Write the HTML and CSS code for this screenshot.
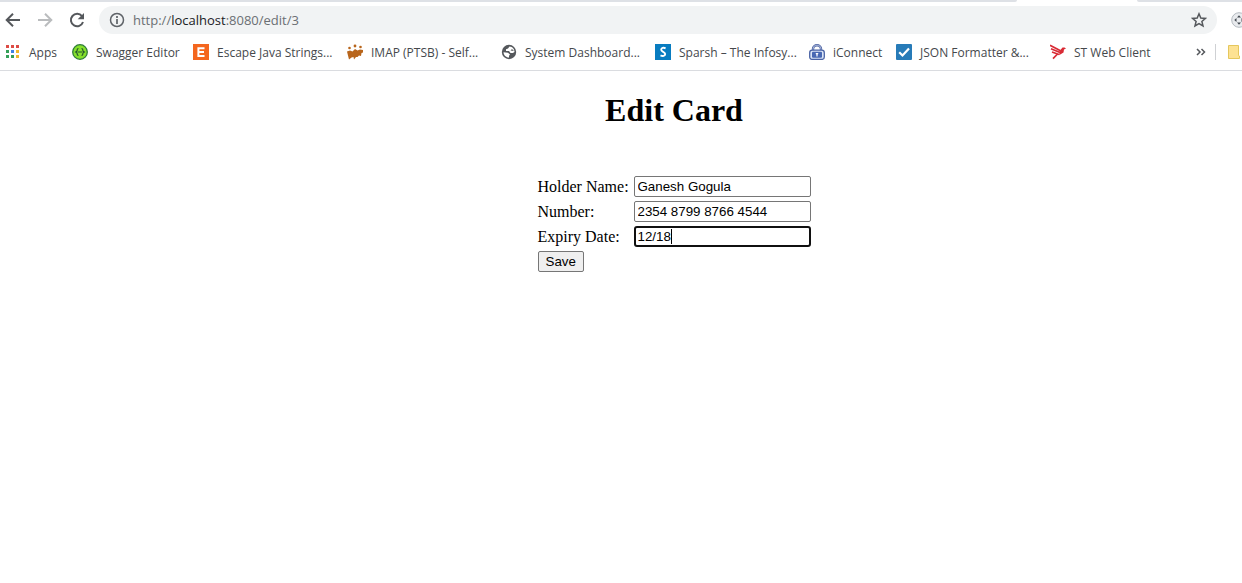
FILE: index.html
```html
<!DOCTYPE html>
<html lang="en">
<head>
<meta charset="utf-8">
<title>Edit Card</title>
<link rel="stylesheet" href="styles.css">
</head>
<body>
<header class="browser">
  <div class="tabstrip"><span class="tabs-before"></span><span class="tabs-after"></span></div>
  <div class="toolbar">
    <div class="nav">
      <button class="nav-button" aria-label="Back"><svg width="16" height="16" viewBox="0 0 16 16" fill="none" stroke="#55585c" stroke-width="2"><path d="M15 8H2M8 1.7 1.7 8 8 14.3"/></svg></button>
      <button class="nav-button" aria-label="Forward"><svg width="16" height="16" viewBox="0 0 16 16" fill="none" stroke="#babcbe" stroke-width="2"><path d="M1 8h13M8 1.7 14.3 8 8 14.3"/></svg></button>
      <button class="nav-button" aria-label="Reload"><svg width="16" height="16" viewBox="0 0 16 16"><path d="M13 4.2A6.2 6.2 0 1 0 14 10" fill="none" stroke="#55585c" stroke-width="2"/><path d="M15 1v6.3H8.7z" fill="#55585c"/></svg></button>
    </div>
    <div class="omnibox">
      <svg width="16" height="16" viewBox="0 0 16 16" fill="none" stroke="#5f6368"><circle cx="8" cy="8" r="6.5" stroke-width="1.5"/><path d="M8 7v5M8 4v2" stroke-width="1.7"/></svg>
      <span class="url"><span class="dim">http://</span>localhost<span class="dim">:8080/edit/3</span></span>
      <button class="star" aria-label="Bookmark this page"><svg width="16" height="16" viewBox="0 0 16 16" fill="none" stroke="#55585c" stroke-width="1.5"><path d="m8 1.8 1.8 4.2 4.6.4-3.5 3 1.1 4.5L8 11.5l-4 2.4 1.1-4.5-3.5-3 4.6-.4z"/></svg></button>
    </div>
    <span class="extension"><svg width="16" height="16" viewBox="0 0 16 16"><circle cx="8" cy="8" r="7.3" fill="#e9ebee" stroke="#b4bac0"/><path d="m8 3.3 2 2.2H6zM8 12.7l2-2.2H6zM3.3 8l2.2-2v4zM12.7 8l-2.2-2v4z" fill="#424951"/></svg></span>
  </div>
  <nav class="bookmarks">
    <div class="links">
    <a class="bookmark" href="#"><svg width="16" height="16" viewBox="0 0 16 16"><path fill="#dd4b45" d="M1 1h3v3H1zM6 1h3v3H6zM11 1h3v3h-3z"/><path fill="#35a058" d="M1 6h3v3H1zM1 11h3v3H1zM6 11h3v3H6z"/><path fill="#3f83e5" d="M6 6h3v3H6z"/><path fill="#f0b72c" d="M11 6h3v3h-3zM11 11h3v3h-3z"/></svg>Apps</a>
    <a class="bookmark" href="#"><svg width="16" height="16" viewBox="0 0 16 16"><circle cx="8" cy="8" r="7.3" fill="#85e02c" stroke="#2f7d38" stroke-width="1.3"/><path d="M6.500 4.500c-1.800 0-1.200 2-1.600 2.800L3.700 8l1.200.7c.4.800-.2 2.800 1.600 2.800M9.500 4.500c1.800 0 1.200 2 1.600 2.800l1.200.7-1.200.7c-.4.800.2 2.800-1.600 2.800M6 8h4" fill="none" stroke="#23552d" stroke-width="1.200"/></svg>Swagger Editor</a>
    <a class="bookmark" href="#"><svg width="16" height="16" viewBox="0 0 16 16"><path fill="#f4661e" d="M0 0h16v16H0z"/><path d="M11.5 4.2H5.4v7.7h6.1M5 8h6" fill="none" stroke="#fff" stroke-width="2"/></svg>Escape Java Strings...</a>
    <a class="bookmark" href="#"><svg width="16" height="16" viewBox="0 0 16 16" fill="#b8651b"><circle cx="2.500" cy="4" r="1.300"/><circle cx="8" cy="2" r="1.400"/><circle cx="13.500" cy="3" r="1.300"/><path d="M0 7.500 3 6.500l2.500 1L8 5l2.500 1.500L13 5.500l3 .5v2.500l-1.500.5-.5 3-2-.5-1.500 1.500-1.500 0-2 2.500-.5-2.500-2 .5-2.500 2-1-4z"/></svg>IMAP (PTSB) - Self...</a>
    <a class="bookmark" href="#"><svg width="16" height="16" viewBox="0 0 16 16"><circle cx="8" cy="8" r="7.200" fill="#55585c"/><path d="M8.500 2.500 7 4.500l-2 .7V7h3l1.500 2h2.300l1.700-1c0-3-2-5.300-5-5.500zM2.500 8.300c.2 3 2.400 5.200 5.500 5.300v-1.800l1-1.300-2-1.700z" fill="#fff"/><path d="M9.500 3.500 11 5 9.500 6.500l3.500.5z" fill="#55585c"/></svg>System Dashboard...</a>
    <a class="bookmark" href="#"><svg width="16" height="16" viewBox="0 0 16 16"><path fill="#087cc0" d="M0 0h16v16H0z"/><path d="M10.600 4.300C8.500 3.300 6.200 3.800 6.200 5.700c0 2.300 4 1.900 4 4.400 0 2-2.500 2.400-4.700 1.300" fill="none" stroke="#fff" stroke-width="1.900"/></svg>Sparsh – The Infosy...</a>
    <a class="bookmark" href="#"><svg width="16" height="16" viewBox="0 0 16 16"><path d="M4 8V5a4 3.800 0 0 1 8 0v3" fill="none" stroke="#5268a5" stroke-width="2.400"/><path d="M4 8V5a4 3.800 0 0 1 8 0v3" fill="none" stroke="#c4d0eb" stroke-width=".7"/><rect x=".7" y="6.200" width="14.600" height="9.200" rx="2.500" fill="#dbe5f6" stroke="#4a63a5" stroke-width="1.300"/><rect x="3" y="7.800" width="10" height="6" rx="1" fill="#4868b3"/><path d="M6.500 9h3l-.9 1.800v1.800H7.400v-1.800z" fill="#fff"/></svg>iConnect</a>
    <a class="bookmark" href="#"><svg width="16" height="16" viewBox="0 0 16 16"><rect width="16" height="16" rx="1" fill="#277bb8"/><path d="m3.200 8.200 3.300 3.300 6.500-7" fill="none" stroke="#fff" stroke-width="2.200"/></svg>JSON Formatter &amp;...</a>
    <a class="bookmark" href="#"><svg width="16" height="16" viewBox="0 0 16 16" fill="none" stroke="#d92b35" stroke-width="1.700"><path d="m0 1.200 10.500 5.600M1 4.700l9 3.800M2 8l7 2.500M7.500 10 3 14.700"/><path d="m10 6.500 2.500-3h2L16 4.500l-2 1-.5 3L9 11.300z" fill="#d92b35" stroke="none"/></svg>ST Web Client</a>
    </div>
    <button class="more" aria-label="More bookmarks"><svg width="10" height="8" viewBox="0 0 10 8" fill="none" stroke="#55585c" stroke-width="1.500"><path d="m1 1 3 3-3 3M5.500 1l3 3-3 3"/></svg></button>
    <span class="folder"><svg width="16" height="16" viewBox="0 0 16 16"><path d="M1.500 1.500h10v10l1 .5v2.500h-11z" fill="#fde293" stroke="#e5c75d"/></svg></span>
  </nav>
</header>
<main class="page">
  <h1 class="title">Edit Card</h1>
  <form class="card-form">
    <table class="fields">
      <tr><td class="label-cell"><label for="holder">Holder Name:</label></td><td><input class="field" id="holder" type="text" value="Ganesh Gogula"></td></tr>
      <tr><td><label for="number">Number:</label></td><td><input class="field" id="number" type="text" value="2354 8799 8766 4544"></td></tr>
      <tr><td><label for="expiry">Expiry Date:</label></td><td class="active-cell"><input class="field active" id="expiry" type="text" value="12/18"><span class="caret"></span></td></tr>
      <tr><td><button class="save" type="button">Save</button></td><td></td></tr>
    </table>
  </form>
</main>
</body>
</html>
```

FILE: styles.css
```css
body {
  margin: 0;
  background: #fff;
  color: #000;
  font: 16px "Liberation Serif", serif;
  overflow-x: hidden;
}

svg { display: block; flex: none; }

.browser {
  border-bottom: 1px solid #dadce0;
  color: #45484c;
  font: 12px "Open Sans", sans-serif;
  overflow: hidden;
}

.tabstrip {
  display: flex;
  justify-content: space-between;
  height: 2px;
}

.tabs-before {
  flex: 1;
  background: #dee1e6;
  margin-right: 120px;
  border-bottom-right-radius: 2px;
}

.tabs-after {
  width: 105px;
  background: #dee1e6;
  border-bottom-left-radius: 2px;
}

.toolbar {
  display: flex;
  align-items: center;
  height: 36px;
  padding-left: 5px;
}

.nav {
  display: flex;
  gap: 16px;
  margin-right: 14px;
}

.nav-button, .star, .more {
  padding: 0;
  border: 0;
  background: none;
}

.omnibox {
  display: flex;
  flex: 1;
  align-items: center;
  gap: 8px;
  height: 28px;
  box-sizing: border-box;
  padding: 0 10px;
  border-radius: 14px;
  background: #f1f3f4;
}

.url {
  flex: 1;
  color: #202124;
  font-size: 13px;
}

.dim { color: #6b6f73; }

.extension {
  width: 11px;
  margin-left: 14px;
  overflow: hidden;
}

.bookmarks {
  display: flex;
  align-items: center;
  height: 28px;
  padding: 0 0 4px 5px;
}

.links {
  display: grid;
  flex: 1;
  grid-template-columns: 67px 121px 154px 154px 154px 154px 87px 154px auto;
}

.bookmark {
  display: flex;
  align-items: center;
  gap: 8px;
  color: inherit;
  text-decoration: none;
  white-space: nowrap;
}

.more { margin-right: 9px; }

.folder {
  width: 15px;
  padding-left: 11px;
  border-left: 1px solid #cfd1d4;
  overflow: hidden;
}

.page {
  display: flex;
  flex-direction: column;
  align-items: center;
  padding-left: 106px;
}

.title {
  margin: 21px 0 44px;
  font-size: 32px;
  line-height: 37px;
}

.fields { border-spacing: 2px; }

.fields td { padding: 1px; line-height: 18px; }

.fields .label-cell { width: 92px; }

.field, .save {
  display: block;
  box-sizing: border-box;
  height: 21px;
  border: 1px solid #767676;
  border-radius: 2px;
  color: #000;
  font-family: "Liberation Sans", sans-serif;
}

.field {
  width: 177px;
  padding: 1px 3px;
  background: #fff;
}

.active {
  border: 2px solid #101010;
  border-radius: 3px;
  padding: 0 2px;
  outline: none;
}

.active-cell { position: relative; }

.caret {
  position: absolute;
  top: 4px;
  left: 38px;
  width: 1px;
  height: 15px;
  background: #000;
}

.save {
  padding: 0 7px;
  background: #efefef;
}
```
